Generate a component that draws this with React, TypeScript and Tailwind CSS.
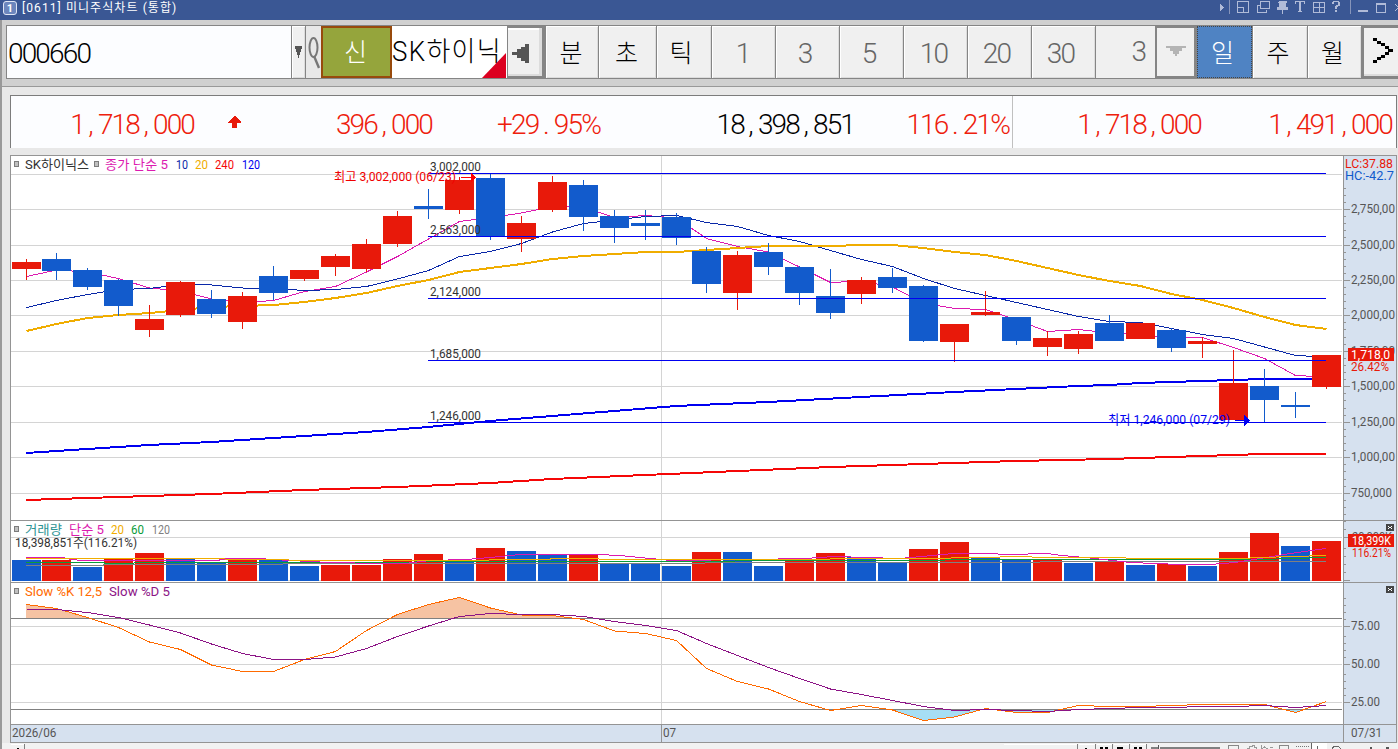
import type { ReactNode } from 'react';

type Candle = [up: number, top: number, bottom: number, high: number, low: number];

// one row per trading day, y values in chart pixels
const candles: Candle[] = [
  [1, 262, 269, 259, 280], [0, 259, 271, 253, 280], [0, 270, 287, 268, 290], [0, 280, 306, 279, 316],
  [1, 319, 330, 305, 337], [1, 282, 315, 281, 317], [0, 299, 314, 290, 318], [1, 296, 322, 292, 329],
  [0, 276, 293, 266, 300], [1, 270, 279, 270, 281], [1, 256, 267, 254, 276], [1, 244, 269, 239, 272],
  [1, 216, 244, 211, 247], [0, 206, 209, 189, 219], [1, 180, 210, 177, 214], [0, 178, 236, 174, 240],
  [1, 223, 239, 216, 252], [1, 182, 210, 176, 212], [0, 185, 217, 180, 231], [0, 216, 228, 210, 243],
  [0, 223, 226, 210, 240], [0, 217, 238, 213, 245], [0, 251, 284, 247, 293], [1, 255, 293, 251, 310],
  [0, 252, 267, 243, 275], [0, 267, 293, 266, 305], [0, 296, 313, 269, 319], [1, 280, 294, 277, 304],
  [0, 277, 288, 268, 293], [0, 286, 341, 285, 342], [1, 324, 342, 324, 362], [1, 312, 315, 291, 316],
  [0, 317, 341, 317, 345], [1, 338, 347, 331, 356], [1, 334, 349, 331, 354], [0, 323, 341, 315, 341],
  [1, 323, 339, 323, 339], [0, 330, 348, 328, 352], [1, 341, 344, 337, 358], [1, 383, 420, 350, 420],
  [0, 386, 400, 369, 422], [0, 405, 407, 392, 418], [1, 355, 387, 355, 389],
];

const volumes: [number, number][] = [
  [0, 560], [1, 560], [0, 567], [1, 559], [1, 553], [0, 559], [0, 563], [1, 559], [0, 560], [0, 566], [1, 565],
  [1, 565], [1, 559], [1, 554], [0, 562], [1, 548], [0, 551], [0, 554], [1, 554], [0, 564], [0, 564], [0, 566],
  [1, 552], [0, 552], [0, 566], [1, 561], [1, 553], [0, 557], [0, 563], [1, 549], [1, 542], [0, 557], [0, 560],
  [1, 560], [0, 563], [1, 562], [0, 565], [1, 564], [0, 566], [1, 552], [1, 533], [0, 546], [1, 541],
];

const ma5 = [276.5, 270, 272, 278.5, 288, 291, 299, 302.5, 300.5, 291.5, 286.5, 272, 256.5, 239, 221.5, 217.5, 213, 206.5, 207, 217.5, 215.5, 218, 238.5, 246.5, 252, 267, 282.5, 281, 287, 303, 308.5, 309.5, 320, 331.5, 329.5, 333, 334.5, 338, 337.5, 347.5, 358.5, 375.5, 377];
const ma10 = [307.5, 300.5, 294.5, 289.5, 288.5, 284.5, 285, 288, 288.5, 290.5, 289.5, 286.5, 279, 270.5, 256.5, 251.5, 243.5, 232, 223.5, 220, 216.5, 215.5, 222.5, 226.5, 235.5, 241.5, 250.5, 259.5, 266.5, 278.5, 288.5, 295.5, 302.5, 309.5, 316.5, 321.5, 322.5, 328.5, 334.5, 338.5, 347, 355.5, 357];
const ma20 = [331, 324, 318, 315, 313, 310, 307, 306, 305, 302, 298, 293, 286, 280, 272, 268, 264, 259, 256, 254, 252, 252, 250, 248, 246, 246, 246, 245, 245, 248, 252, 255, 261, 268, 275, 281, 286, 294, 300, 308, 317, 325, 329];
const slowK = [604.5, 608.5, 617.5, 627.5, 642, 649.5, 665, 671.5, 671.5, 659.5, 651.5, 630.5, 614.5, 604.5, 597.5, 608, 615, 615.5, 619.5, 631, 633.5, 640.5, 668.5, 681.5, 689, 701.5, 710.5, 705.5, 710, 720.5, 717, 708.5, 712.5, 712.5, 705.5, 706.5, 706.5, 705.5, 704.5, 704.5, 704.5, 712.5, 701.5];
const slowD = [609.5, 609.5, 612.5, 617.5, 625, 633, 644, 653.5, 659.5, 659.5, 657, 648.5, 636.5, 626, 616.5, 613.5, 614.5, 614.5, 616.5, 621.5, 625.5, 630.5, 643.5, 655.5, 667.5, 678.5, 689, 694.5, 700.5, 706.5, 710.5, 709.5, 710.5, 711.5, 709.5, 708.5, 707.5, 707.5, 706.5, 706.5, 705.5, 707.5, 705.5];

const ma120 = '26,453 87,449 149,445 211,442 273,438 304,436 366,432 428,427 490,421 552,416 614,411 676,406 768,402 861,397 954,392 1016,389 1078,386 1109,385 1140,383 1202,381 1264,379 1326,379';
const ma240 = '26,500 118,497 211,494 304,490 397,487 490,483 552,479 645,475 738,471 831,467 923,464 1016,461 1109,459 1202,456 1264,454 1326,454';

const RED = '#e8190a';
const BLUE = '#125bcc';

const left = (i: number) => (i === 0 ? 12 : i < 22 ? 11 + 31 * i : 10 + 31 * i);
const line = (ys: number[]) => ys.map((y, i) => `${left(i) + 14.5},${y}`).join(' ');

const Label = ({ x, y, w, fill = '#333', children }: { x: number; y: number; w: number; fill?: string; children: string }) => (
  <text x={x} y={y} textLength={w} lengthAdjust="spacingAndGlyphs" fill={fill} fontSize="13">{children}</text>
);

const Marker = ({ x, y }: { x: number; y: number }) => (
  <rect x={x + 0.5} y={y + 0.5} width="4" height="5" fill="#c0c0c0" stroke="#7c7c7c" />
);

const HLine = ({ y, x1 = 11, x2 = 1342, color = '#d4d4d4' }: { y: number; x1?: number; x2?: number; color?: string }) => (
  <rect x={x1} y={y} width={x2 - x1} height="1" fill={color} />
);

const Pane = ({ top, height, plot, axis }: { top: number; height: number; plot: ReactNode; axis: ReactNode }) => (
  <div className="flex border-b border-[#949494]">
    <svg className="block shrink-0 bg-white" width="1332" height={height} viewBox={`11 ${top} 1332 ${height}`} shapeRendering="crispEdges">{plot}</svg>
    <svg className="block shrink-0 border-l border-[#949494] bg-[#d6e1ef]" width="53" height={height} viewBox={`1344 ${top} 52 ${height}`} shapeRendering="crispEdges">{axis}</svg>
  </div>
);

const Ticks = ({ major, minor }: { major: number[]; minor: number[] }) => (
  <>
    {major.map((y) => <HLine key={y} y={y} x1={1344} x2={1350} color="#949494" />)}
    {minor.map((y) => <HLine key={y} y={y} x1={1344} x2={1346} color="#949494" />)}
  </>
);

const CloseBox = ({ y }: { y: number }) => (
  <g>
    <rect x="1386" y={y} width="8" height="7" fill="#444" />
    <path d={`M1388 ${y + 2}h1v1h-1zM1391 ${y + 2}h1v1h-1zM1389 ${y + 3}h2v1h-2zM1388 ${y + 4}h1v1h-1zM1391 ${y + 4}h1v1h-1z`} fill="#fff" />
  </g>
);

// digits sit on a fixed pitch, so separators get the same room as a digit
const Num = ({ value }: { value: string }) => (
  <span className="whitespace-nowrap tracking-[-1.85px]">
    {value.split(/([,.])/).map((part, i) =>
      part === ',' || part === '.' ? <span key={i} className="pr-[6px] pl-[4.5px]">{part}</span> : part
    )}
  </span>
);

const TitleBar = () => (
  <div className="flex h-5 w-full shrink-0 items-start bg-[#3a5794] text-white">
    <div className="mt-px ml-[3px] flex h-[14px] w-[14px] items-center justify-center rounded-[3px] border border-[#dfe6f5] bg-[#6c86bd] text-[11px] leading-none font-bold">1</div>
    <div className="mt-px ml-[5px] text-[12px] leading-[15px] tracking-[1.08px] whitespace-pre">[0611] 미니주식차트 (통합)</div>
    <svg className="ml-auto block" width="182" height="18" viewBox="1216 0 182 18" fill="none" stroke="#b0bbd8" shapeRendering="crispEdges">
      <path d="M1220 4v7l4-3.5z" fill="#b0bbd8" stroke="none" />
      <path d="M1229.5 0v14M1350.5 0v14" stroke="#8795ba" />
      <path d="M1237.5 1.500h11v11h-11zM1238 7.500h5v5" />
      <path d="M1260.500 1.500h9v7h-9zM1260 5.500h-2.500v7h9v-3" />
      <path d="M1279 1h8v2h-1v4h2v3h-11v-3h2v-4h-1z" fill="#b0bbd8" stroke="none" />
      <path d="M1282.500 9v5" />
      <path d="M1295 1h10v3h-1v-2h-3v9h1v1h-4v-1h1v-9h-3v2h-1z" fill="#b0bbd8" stroke="none" />
      <path d="M1313.500 2.500h11v10h-11zM1319.500 2v10M1313 7.500h12" />
      <path d="M1332 2h1v-1h6v1h1v4h-2v1h-1v2h-2v-3h1v-1h2v-3h-4v2h-2zM1335 10h2v2h-2z" fill="#b0bbd8" stroke="none" />
      <path d="M1358 11h10" strokeWidth="2" />
      <path d="M1376.500 4.500h9v8h-9zM1376 3.500h10" />
      <path d="M1395 4l7 7m0-7l-7 7" />
    </svg>
  </div>
);

const Cell = ({ className, children }: { className: string; children: ReactNode }) => (
  <div className={`flex shrink-0 items-center justify-center border-r border-[#858585] bg-[#f0f0f0] shadow-[inset_1px_1px_0_#fff,inset_-1px_-1px_0_#dcdcdc] ${className}`}>{children}</div>
);

const Toolbar = () => (
  <div className="flex h-[67px] w-full shrink-0 border-b border-b-[#999] border-l-2 border-l-[#999] bg-[#d0d0d0] pt-[5px] pb-[7px] pl-1">
    <div className="flex h-[54px] w-[1392px] shrink-0 overflow-hidden border-y border-l border-[#858585] text-[28px] font-light text-black">
      <div className="flex w-[285px] shrink-0 items-center border-r border-[#858585] bg-[#fcfdff] pt-[3px] pl-px"><Num value="000660" /></div>
      <Cell className="w-[14px] bg-[#e8e8e8]">
        <svg width="7" height="12" viewBox="0 0 7 12" shapeRendering="crispEdges"><path d="M0 0h7v3h-1v3h-1v3h-1v3h-1v-3h-1v-3h-1v-3h-1z" fill="#555" /></svg>
      </Cell>
      <div className="flex w-[15px] shrink-0 items-center justify-center bg-[#e8e8e8]">
        <svg width="12" height="34" viewBox="0 0 12 34" fill="none" stroke="#777" strokeWidth="2"><ellipse cx="5.500" cy="12.500" rx="4" ry="9.500" /><path d="M6 21l5 12" strokeWidth="2.400" /></svg>
      </div>
      <div className="flex w-[71px] shrink-0 items-center justify-center border-2 border-[#984a0c] bg-[#95a53c] pt-0.5 pr-0.5 text-[25px] text-white">신</div>
      <div className="relative w-[115px] shrink-0 overflow-hidden bg-white pt-[5px] text-[27px] leading-[42px] whitespace-nowrap">
        <span className="inline-block origin-left scale-x-[0.96] tracking-[1.4px]">SK하이닉</span>
        <svg className="absolute right-px bottom-0" width="24" height="25" viewBox="0 0 24 25"><path d="M24 0v25H0z" fill="#dc0020" /></svg>
      </div>
      <div className="flex w-[39px] shrink-0 items-center border-y-2 border-r-4 border-l border-[#858585] bg-[#f0f0f0] pt-0.5 pl-1 shadow-[inset_-3px_-2px_0_#dcdcdc,inset_0_2px_0_#fff]">
        <svg width="17" height="19" viewBox="0 0 17 19" shapeRendering="crispEdges"><path d="M17 0v19h-4v-2h-4v-3h-4v-3h-5v-3h5v-3h4v-2h4v-3z" fill="#555" /></svg>
      </div>
      <Cell className="w-[53px] pt-[3px] pr-0.5 text-[25px]">분</Cell>
      <Cell className="w-[58px] pt-[3px] pr-0.5 text-[25px]">초</Cell>
      <Cell className="w-[55px] pt-[3px] pr-1.5 text-[25px]">틱</Cell>
      <Cell className="w-16 pt-[3px] text-[#666]">1</Cell>
      <Cell className="w-16 pt-[3px] pr-1 text-[#666]">3</Cell>
      <Cell className="w-16 pt-[3px] pr-1 text-[#666]">5</Cell>
      <Cell className="w-16 pt-[3px] pr-1 text-[#666]"><Num value="10" /></Cell>
      <Cell className="w-16 pt-[3px] pr-1.5 text-[#666]"><Num value="20" /></Cell>
      <Cell className="w-16 pt-[3px] pr-1.5 text-[#666]"><Num value="30" /></Cell>
      <div className="flex w-[59px] shrink-0 items-center justify-end bg-[#f0f0f0] pr-2 text-[#666]">3</div>
      <div className="flex w-[42px] shrink-0 items-center justify-center border-2 border-r-3 border-[#858585] bg-[#f0f0f0] pb-0.5">
        <svg width="20" height="10" viewBox="0 0 20 10" shapeRendering="crispEdges"><path d="M0 0h20v2h-4v3h-3v3h-2v2h-2v-2h-2v-3h-3v-3h-4z" fill="#b4b4b4" /></svg>
      </div>
      <div className="flex w-14 shrink-0 border-r border-[#858585] bg-[#4f83c3]">
        <div className="flex flex-1 items-center justify-center border border-dotted border-[#444] pt-[3px] pr-1 text-[25px] text-white">일</div>
      </div>
      <Cell className="w-[55px] pt-[3px] pr-1 text-[25px]">주</Cell>
      <Cell className="w-[54px] pt-[3px] pr-1 text-[25px]">월</Cell>
      <div className="flex w-10 shrink-0 items-center border-y-2 border-l-2 border-[#858585] bg-[#f0f0f0] pb-0.5 pl-2 shadow-[inset_0_-2px_0_#dcdcdc]">
        <svg width="22" height="26" viewBox="0 0 22 26" shapeRendering="crispEdges">
          <path d="M1 0h4v3h-4zM5 3h4v3h-4zM9 5h4v3h-4zM13 8h4v3h-4zM16 11h5v3h-5zM13 14h4v3h-4zM9 17h4v3h-4zM5 19h4v3h-4zM1 22h4v3h-4z" fill="#000" />
        </svg>
      </div>
    </div>
  </div>
);

const Quote = () => (
  <div className="mr-[1px] ml-2 flex h-[53px] shrink-0 border-t border-r border-l border-[#7c7c7c] bg-[#fcfdff] text-right text-[28px] leading-[58px] font-light text-[#ee200c]">
    <div className="w-[186px] pr-[3px]"><Num value="1,718,000" /></div>
    <div className="flex w-[77px] justify-center pt-5 pr-0.5">
      <svg width="13" height="13" viewBox="0 0 13 13" shapeRendering="crispEdges"><path d="M6 0h1l6 6v1h-4v5h-5v-5h-4v-1z" fill="#e8190a" /></svg>
    </div>
    <div className="w-[161px] pr-[3px]"><Num value="396,000" /></div>
    <div className="w-[167px] pr-0.5"><Num value="+29.95%" /></div>
    <div className="w-[254px] pr-0.5 text-black"><Num value="18,398,851" /></div>
    <div className="w-[157px] border-r border-[#c0c0c0] pr-[3px]"><Num value="116.21%" /></div>
    <div className="w-[191px] pr-[3px]"><Num value="1,718,000" /></div>
    <div className="w-[191px] pr-[3px]"><Num value="1,491,000" /></div>
  </div>
);

const PricePlot = () => (
  <>
    {[174, 209, 245, 280, 315, 351, 386, 422, 457, 493].map((y) => <HLine key={y} y={y} />)}
    <rect x="661" y="156" width="1" height="364" fill="#d4d4d4" />
    <g fill="none" strokeWidth="1">
      <polyline points={line(ma5)} stroke="#dc1ab0" />
      <polyline points={line(ma10)} stroke="#0a28a8" />
      <polyline points={line(ma20)} stroke="#f0ad00" strokeWidth="2" />
      <polyline points={ma240} stroke="#f50808" strokeWidth="2" />
      <polyline points={ma120} stroke="#0000f0" strokeWidth="2" />
    </g>
    {candles.map(([up, top, bottom, high, low], i) => (
      <g key={i} fill={up ? RED : BLUE}>
        <rect x={left(i) + 14} y={high} width="1" height={low - high} />
        <rect x={left(i)} y={top} width="29" height={bottom - top} />
      </g>
    ))}
    {[173, 236, 298, 360, 422].map((y) => <HLine key={y} y={y} x1={428} x2={1326} color="#0000f0" />)}
    <Label x={430} y={171} w={51}>3,002,000</Label>
    <Label x={430} y={234} w={51}>2,563,000</Label>
    <Label x={430} y={296} w={51}>2,124,000</Label>
    <Label x={430} y={358} w={51}>1,685,000</Label>
    <Label x={430} y={420} w={51}>1,246,000</Label>
    <Label x={334} y={181} w={122} fill="#f00000">최고 3,002,000 (06/23)</Label>
    <path d="M461 177h10v-5l5 5.500l-5 5v-5h-10z" fill="#f00" />
    <Label x={1108} y={424} w={122} fill="#0000f0">최저 1,246,000 (07/29)</Label>
    <path d="M1235 420h9v-5l6 5.500l-6 5.500v-5h-9z" fill="#0000f0" />
    <Marker x={14} y={161} />
    <Label x={25} y={169} w={64}>SK하이닉스</Label>
    <Marker x={94} y={161} />
    <Label x={105} y={169} w={63} fill="#dc1ab0">종가 단순 5</Label>
    <Label x={176} y={169} w={12} fill="#0a28a8">10</Label>
    <Label x={195} y={169} w={13} fill="#f0ad00">20</Label>
    <Label x={215} y={169} w={19} fill="#f50808">240</Label>
    <Label x={242} y={169} w={18} fill="#0000f0">120</Label>
  </>
);

const PriceAxis = () => (
  <>
    <Ticks
      major={[209, 245, 280, 315, 351, 386, 422, 457, 493]}
      minor={[188, 195, 202, 216, 223, 230, 237, 252, 259, 266, 273, 287, 294, 301, 308, 322, 329, 337, 344, 358, 365, 372, 379, 393, 400, 408, 415, 429, 436, 443, 450, 464, 471, 479, 486, 500, 507, 514]}
    />
    <Label x={1345} y={168} w={48} fill="#e8190a">LC:37.88</Label>
    <Label x={1345} y={180} w={49} fill="#125bcc">HC:-42.7</Label>
    <Label x={1351} y={213} w={44} fill="#555">2,750,00</Label>
    <Label x={1351} y={249} w={44} fill="#555">2,500,00</Label>
    <Label x={1351} y={284} w={44} fill="#555">2,250,00</Label>
    <Label x={1351} y={319} w={44} fill="#555">2,000,00</Label>
    <Label x={1351} y={355} w={44} fill="#555">1,750,00</Label>
    <Label x={1351} y={390} w={44} fill="#555">1,500,00</Label>
    <Label x={1351} y={426} w={44} fill="#555">1,250,00</Label>
    <Label x={1351} y={461} w={44} fill="#555">1,000,00</Label>
    <Label x={1351} y={497} w={41} fill="#555">750,000</Label>
    <rect x="1348" y="348" width="46" height="13" fill={RED} />
    <Label x={1351} y={359} w={39} fill="#fff">1,718,0</Label>
    <Label x={1351} y={371} w={38} fill="#e8190a">26.42%</Label>
  </>
);

const VolumePlot = () => (
  <>
    <HLine y={537} />
    <HLine y={580} />
    <rect x="661" y="521" width="1" height="61" fill="#d4d4d4" />
    {volumes.map(([up, top], i) => (
      <rect key={i} x={left(i)} y={top} width="29" height={581 - top} fill={up ? RED : BLUE} />
    ))}
    <g fill="none">
      <polyline stroke="#808080" points="26,565.5 103,565.5 104,564.5 466,563.5 690,563.5 720,562.5 1030,562.5 1050,561.5 1326,561.5" />
      <polyline stroke="#0a9b3a" points="26,562.5 104,562.5 105,563.5 133,563.5 135,562.5 400,562.5 430,561.5 690,561.5 780,560.5 930,560.5 960,559.5 1260,559.5 1326,557.5" />
      <polyline stroke="#dc1ab0" points="26,557.5 62,557.5 72,559.5 82,560.5 217,560.5 227,558.500 258,558.500 290,560.500 330,562.500 380,563.500 405,563.500 430,560.500 466,559.500 490,557.500 520,554.500 598,554.500 620,555.500 650,558.500 672,560.500 700,560.500 722,559.500 752,559.500 805,558.500 835,556.500 866,557.500 900,558.500 932,555.500 954,553.500 985,553.500 1010,554.500 1047,553.500 1062,555.500 1095,558.500 1130,562.500 1180,564.500 1210,564.500 1235,562.500 1260,558.500 1290,553.500 1326,548.500" />
      <polyline stroke="#f0ad00" points="26,558.500 224,558.500 226,559.500 288,559.500 290,560.500 474,560.500 505,559.500 598,558.500 600,559.500 800,559.500 860,558.500 932,558.500 970,557.500 1031,556.500 1033,557.500 1125,557.500 1127,558.500 1187,558.500 1240,558.500 1260,557.500 1326,555.500" />
    </g>
    <Marker x={14} y={526} />
    <Label x={25} y={534} w={37} fill="#2e9494">거래량</Label>
    <Label x={69} y={534} w={35} fill="#dc1ab0">단순 5</Label>
    <Label x={111} y={534} w={13} fill="#f0ad00">20</Label>
    <Label x={131} y={534} w={13} fill="#0a9b3a">60</Label>
    <Label x={152} y={534} w={18} fill="#808080">120</Label>
    <Label x={15} y={547} w={122}>18,398,851주(116.21%)</Label>
  </>
);

const VolumeAxis = () => (
  <>
    <Ticks major={[537, 580]} minor={[521, 529, 548, 556, 564, 572]} />
    <Label x={1352} y={541} w={40} fill="#555">20,000K</Label>
    <CloseBox y={524} />
    <rect x="1348" y="534" width="46" height="13" fill={RED} />
    <Label x={1352} y={545} w={39} fill="#fff">18,399K</Label>
    <Label x={1352} y={557} w={39} fill="#e8190a">116.21%</Label>
  </>
);

const SlowPlot = () => {
  const k = line(slowK);
  return (
    <>
      <clipPath id="overbought"><rect x="26" y="583" width="1302" height="35" /></clipPath>
      <clipPath id="oversold"><rect x="26" y="710" width="1302" height="14" /></clipPath>
      {[626, 664, 702].map((y) => <HLine key={y} y={y} />)}
      <rect x="661" y="583" width="1" height="141" fill="#d4d4d4" />
      <polygon points={`26,724 ${k} 1326,724`} fill="#f6c3a3" clipPath="url(#overbought)" />
      <polygon points={`26,583 ${k} 1326,583`} fill="#a6def4" clipPath="url(#oversold)" />
      <HLine y={618} color="#808080" />
      <HLine y={709} color="#808080" />
      <polyline points={k} fill="none" stroke="#ff6a00" />
      <polyline points={line(slowD)} fill="none" stroke="#8c1486" />
      <Marker x={14} y={588} />
      <Label x={25} y={596} w={77} fill="#ff6a00">Slow %K 12,5</Label>
      <Label x={109} y={596} w={61} fill="#8c1486">Slow %D 5</Label>
    </>
  );
};

const SlowAxis = () => (
  <>
    <Ticks major={[626, 664, 702]} minor={[598, 605, 612, 619, 636, 643, 650, 657, 674, 681, 688, 695]} />
    <CloseBox y={586} />
    <Label x={1351} y={630} w={29} fill="#555">75.00</Label>
    <Label x={1351} y={668} w={29} fill="#555">50.00</Label>
    <Label x={1351} y={706} w={29} fill="#555">25.00</Label>
  </>
);

const DateText = ({ children }: { children: string }) => (
  <span className="block origin-left scale-x-[0.9] text-[13px] leading-[15px] text-[#555]">{children}</span>
);

const BottomBar = () => (
  <div className="h-[6px] w-full shrink-0 overflow-hidden bg-[#f2f2f2] pl-2">
    <svg className="block" width="1386" height="6" viewBox="11 743 1386 6" fill="none" shapeRendering="crispEdges">
      <path d="M25.500 744v6M1078.500 744v6M1096.500 744v6M1113.500 744v6M1130.500 744v6M1147.500 744v6" stroke="#808080" />
      <path d="M12 744.500h13M1005 744.500h73M1080 744.500h16M1098 744.500h15M1115 744.500h15M1132 744.500h15" stroke="#fff" />
      <path d="M18 748h2v1h-2zM1086 748h2v1h-2zM1101 747h3v2h-3zM1106 747h3v2h-3zM1118 747h6v2h-6zM1135 747h3v2h-3zM1140 747h3v2h-3z" fill="#000" />
      <path d="M1152 748h7M1161 748h60" stroke="#808080" strokeWidth="2" />
      <path d="M1159.500 745v4" stroke="#555" />
      <path d="M1229.500 750v-4l1-1h8l1 1v4M1280.500 750v-4.500h9v4.500" stroke="#888" />
      <path d="M1248 748.500h2v-2h3v-1h2v2h2v2M1262.500 745v4l3-2 3 2M1271 748l3-1" stroke="#999" />
      <path d="M1297 746.500h13" stroke="#777" strokeDasharray="1 1" />
      <rect x="1312" y="743" width="16" height="6" fill="#fff" />
      <path d="M1312.500 743v6M1318.500 746v3" stroke="#666" />
      <path d="M1333 749l2-3h4l3 3" stroke="#666" />
      <path d="M1371 747h2v2h-2zM1387 747h3v2h-3z" fill="#555" />
    </svg>
  </div>
);

export default function App() {
  return (
    <div className="flex h-[749px] w-[1398px] flex-col overflow-hidden bg-[#e8e8e8] font-['Roboto','Noto_Sans_CJK_KR',sans-serif]">
      <TitleBar />
      <Toolbar />
      <div className="flex min-h-0 flex-1 flex-col border-l-2 border-[#999] pt-2">
        <Quote />
        <div className="mt-[7px] mr-px ml-2 shrink-0 border-t border-r border-l border-[#949494]">
          <Pane top={156} height={364} plot={<PricePlot />} axis={<PriceAxis />} />
          <Pane top={521} height={61} plot={<VolumePlot />} axis={<VolumeAxis />} />
          <Pane top={583} height={141} plot={<SlowPlot />} axis={<SlowAxis />} />
          <div className="flex h-[18px] border-b border-[#949494] bg-[#d6e1ef]">
            <div className="w-[650px] pl-px"><DateText>2026/06</DateText></div>
            <div className="flex-1 border-l border-[#949494] pl-px"><DateText>07</DateText></div>
            <div className="w-[53px] border-l border-[#949494] pl-[7px]"><DateText>07/31</DateText></div>
          </div>
        </div>
        <BottomBar />
      </div>
    </div>
  );
}
